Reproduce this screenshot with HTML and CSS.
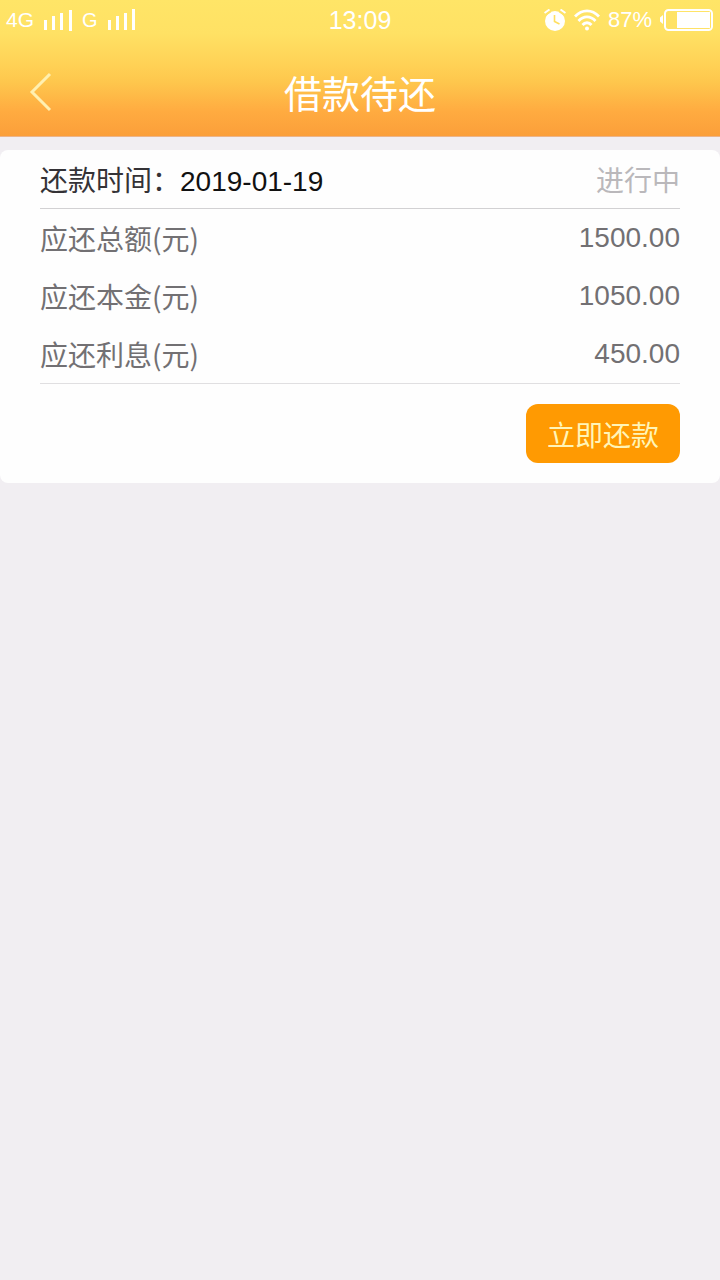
FILE: index.html
```html
<!DOCTYPE html>
<html lang="zh-CN">
<head>
    <meta charset="UTF-8">
    <meta name="viewport" content="width=device-width, initial-scale=1.0">
    <title>借款待还</title>
    <link rel="stylesheet" href="styles.css">
</head>
<body>
    <header class="header">
        <!-- Status bar -->
        <div class="status-bar">
            <div class="status-left">
                <span class="network">4G</span>
                <svg class="signal" width="30" height="22" viewBox="0 0 30 22" fill="#fff">
                    <path d="M1 11h3v10H1zM9 7h3v14H9zM17 4h3v17h-3zM26 1h3v21h-3z"/>
                </svg>
                <span class="network network-small">G</span>
                <svg class="signal" width="30" height="22" viewBox="0 0 30 22" fill="#fff">
                    <path d="M1 11h3v10H1zM9 7h3v14H9zM17 4h3v17h-3zM25 0h3v21h-3z"/>
                </svg>
            </div>
            <div class="status-time">13:09</div>
            <div class="status-right">
                <svg width="22" height="22" viewBox="0 0 22 22" fill="none">
                    <circle cx="11" cy="12" r="10" fill="#fff"/>
                    <path d="M1 4.5L6 1M21 4.5L16 1" stroke="#ffe265" stroke-width="5"/>
                    <path d="M0.500 4L5.500 0.500M21.500 4L16.500 0.500" stroke="#fff" stroke-width="2"/>
                    <path d="M10.5 6v6.500l5 2.5" stroke="#ffdf60" stroke-width="1.6"/>
                </svg>
                <svg class="wifi" width="26" height="22" viewBox="0 0 26 22" fill="none" stroke="#fff" stroke-width="2.8">
                    <path d="M1 7.5C8 0 18 0 25 7.5M4.5 12C9.5 6.5 16.5 6.5 21.5 12M8.5 16C11 13 15 13 17.5 16"/>
                    <circle cx="13" cy="19.5" r="2" fill="#fff" stroke="none"/>
                </svg>
                <span class="percent">87%</span>
                <svg class="battery" width="54" height="22" viewBox="0 0 54 22" fill="none">
                    <path d="M3 6v9L0 12.5v-4z" fill="#fff"/>
                    <rect x="5" y="1" width="47" height="20" rx="3.5" stroke="#fff" stroke-width="2"/>
                    <rect x="17" y="3" width="33" height="16" fill="#fff"/>
                </svg>
            </div>
        </div>

        <!-- Title bar -->
        <div class="nav-bar">
            <button class="back-btn" type="button" aria-label="返回">
                <svg width="24" height="42" viewBox="0 0 24 42" fill="none" stroke="#fff0b0" stroke-width="3">
                    <path d="M22 3L4 21L22 39"/>
                </svg>
            </button>
            <h1 class="title">借款待还</h1>
        </div>
    </header>

    <main class="card">
        <div class="card-head">
            <div class="due-date">还款时间：<time datetime="2019-01-19">2019-01-19</time></div>
            <div class="state">进行中</div>
        </div>
        <table class="amounts">
            <tr>
                <th scope="row">应还总额(元)</th>
                <td>1500.00</td>
            </tr>
            <tr>
                <th scope="row">应还本金(元)</th>
                <td>1050.00</td>
            </tr>
            <tr>
                <th scope="row">应还利息(元)</th>
                <td>450.00</td>
            </tr>
        </table>
        <div class="card-foot">
            <button class="repay-btn" type="button">立即还款</button>
        </div>
    </main>
</body>
</html>
```
FILE: styles.css
```css
* {
    box-sizing: border-box;
}
body {
    margin: 0;
    min-height: 100vh;
    background-color: #f1eef2;
    font-family: "Noto Sans CJK SC", sans-serif;
    font-size: 28px;
    color: #727073;
}
.header {
    background: linear-gradient(#ffe567 0%, #ffe164 25%, #ffd155 48%, #fec74d 60%, #ffab40 82%, #fb9f3a 100%);
    border-bottom: 1px solid #ecb48a;
    color: #fff;
}

/* Status bar */
.status-bar {
    display: grid;
    grid-template-columns: 1fr auto 1fr;
    align-items: center;
    height: 40px;
    padding: 0 6px;
    font-family: "Liberation Sans", Arial, sans-serif;
}
.status-left,
.status-right {
    display: flex;
    align-items: center;
    gap: 9px;
}
.status-right {
    gap: 8px;
    justify-content: flex-end;
}
.network {
    font-size: 21px;
}
.network-small {
    font-size: 20px;
}
.status-time {
    font-size: 25px;
}
.percent {
    font-size: 22px;
}

/* Title bar */
.nav-bar {
    display: grid;
    grid-template-columns: 60px 1fr 60px;
    align-items: center;
    height: 96px;
    padding-top: 8px;
}
.back-btn {
    display: flex;
    justify-content: flex-end;
    padding: 12px 8px;
    background: none;
    border: none;
    cursor: pointer;
}
.title {
    margin: 0;
    font-size: 38px;
    font-weight: 400;
    line-height: 60px;
    text-align: center;
}

/* Repayment card */
.card {
    margin-top: 13px;
    padding: 0 40px;
    background-color: #fefefe;
    border-radius: 8px;
}
.card-head {
    display: flex;
    justify-content: space-between;
    line-height: 58px;
    border-bottom: 1px solid #d2d1d3;
}
.due-date {
    color: #343236;
}
.due-date time {
    font-family: "Liberation Sans", Arial, sans-serif;
    line-height: 1;
    color: #111;
}
.state {
    color: #bab8bb;
}
.amounts {
    width: 100%;
    border-collapse: collapse;
    line-height: 58px;
}
.amounts th,
.amounts td {
    padding: 0;
}
.amounts th {
    font-weight: 400;
    text-align: left;
}
.amounts td {
    font-family: "Liberation Sans", Arial, sans-serif;
    text-align: right;
}
.card-foot {
    display: flex;
    justify-content: flex-end;
    padding: 20px 0;
    border-top: 1px solid #e0dfe1;
}
.repay-btn {
    height: 59px;
    padding: 0 21px;
    font-family: inherit;
    font-size: 28px;
    color: #fff5b8;
    background-color: #ff9a02;
    border: none;
    border-radius: 12px;
    cursor: pointer;
}
```
